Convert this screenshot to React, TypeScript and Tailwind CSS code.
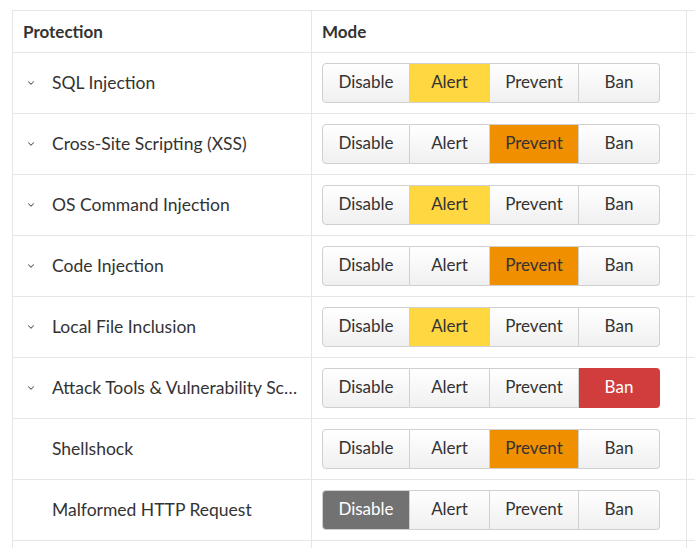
import { ChevronDown } from "lucide-react";

type Mode = "Disable" | "Alert" | "Prevent" | "Ban";

const rows: { name: string; mode: Mode; expandable: boolean }[] = [
    { name: "SQL Injection", mode: "Alert", expandable: true },
    { name: "Cross-Site Scripting (XSS)", mode: "Prevent", expandable: true },
    { name: "OS Command Injection", mode: "Alert", expandable: true },
    { name: "Code Injection", mode: "Prevent", expandable: true },
    { name: "Local File Inclusion", mode: "Alert", expandable: true },
    { name: "Attack Tools & Vulnerability Scanners", mode: "Ban", expandable: true },
    { name: "Shellshock", mode: "Prevent", expandable: false },
    { name: "Malformed HTTP Request", mode: "Disable", expandable: false },
];

const segments: { mode: Mode; width: string; active: string }[] = [
    { mode: "Disable", width: "w-[88px] rounded-l-[4px]", active: "bg-[#727272] text-white border-[#727272]" },
    { mode: "Alert", width: "w-[80px]", active: "bg-[#ffd740] text-[#333]" },
    { mode: "Prevent", width: "w-[89px]", active: "bg-[#f09000] text-[#333]" },
    { mode: "Ban", width: "w-[81px] rounded-r-[4px]", active: "bg-[#d13d3d] text-white border-[#d13d3d]" },
];

const ModeGroup = ({ value }: { value: Mode }) => {
    return (
        <div className="flex h-[40px]">
            {segments.map((s, i) => (
                <div
                    key={s.mode}
                    className={
                        s.width +
                        " flex items-center justify-center pb-[2px] border-y border-r border-[#d0d0d0] text-[17px] " +
                        (i === 0 ? "border-l " : "") +
                        (value === s.mode
                            ? s.active
                            : "bg-gradient-to-b from-white to-[#f0f0f0] text-[#333]")
                    }
                >
                    {s.mode}
                </div>
            ))}
        </div>
    );
};

const App = () => {
    return (
        <div className="bg-white w-[695px] h-[548px] overflow-hidden pt-[10px] pl-[12px] text-[#333]" style={{ fontFamily: "Lato, 'Open Sans', sans-serif" }}>
            <table className="border-collapse table-fixed w-[900px]">
                <thead>
                    <tr className="h-[42px]">
                        <th className="w-[299px] border border-[#e6e6e6] text-left font-bold text-[17px] px-[10px]">
                            Protection
                        </th>
                        <th className="w-[375px] border border-[#e6e6e6] text-left font-bold text-[17px] px-[10px]">
                            Mode
                        </th>
                        <th className="border border-[#e6e6e6]"></th>
                    </tr>
                </thead>
                <tbody>
                    {rows.map((row) => (
                        <tr key={row.name} className="h-[61px]">
                            {/* name cell */}
                            <td className="border border-[#e6e6e6] pl-[13px] pr-[12px]">
                                <div className="flex items-center text-[17.5px]">
                                    <span className="w-[26px] flex-none flex items-center">
                                        {row.expandable && (
                                            <ChevronDown size={10} strokeWidth={2.5} className="text-[#555]" />
                                        )}
                                    </span>
                                    <span className="truncate">{row.name}</span>
                                </div>
                            </td>
                            {/* mode cell */}
                            <td className="border border-[#e6e6e6] px-[10px]">
                                <ModeGroup value={row.mode} />
                            </td>
                            <td className="border border-[#e6e6e6]"></td>
                        </tr>
                    ))}
                    <tr className="h-[20px]">
                        <td className="border border-[#e6e6e6]"></td>
                        <td className="border border-[#e6e6e6]"></td>
                        <td className="border border-[#e6e6e6]"></td>
                    </tr>
                </tbody>
            </table>
        </div>
    );
};

export default App;
